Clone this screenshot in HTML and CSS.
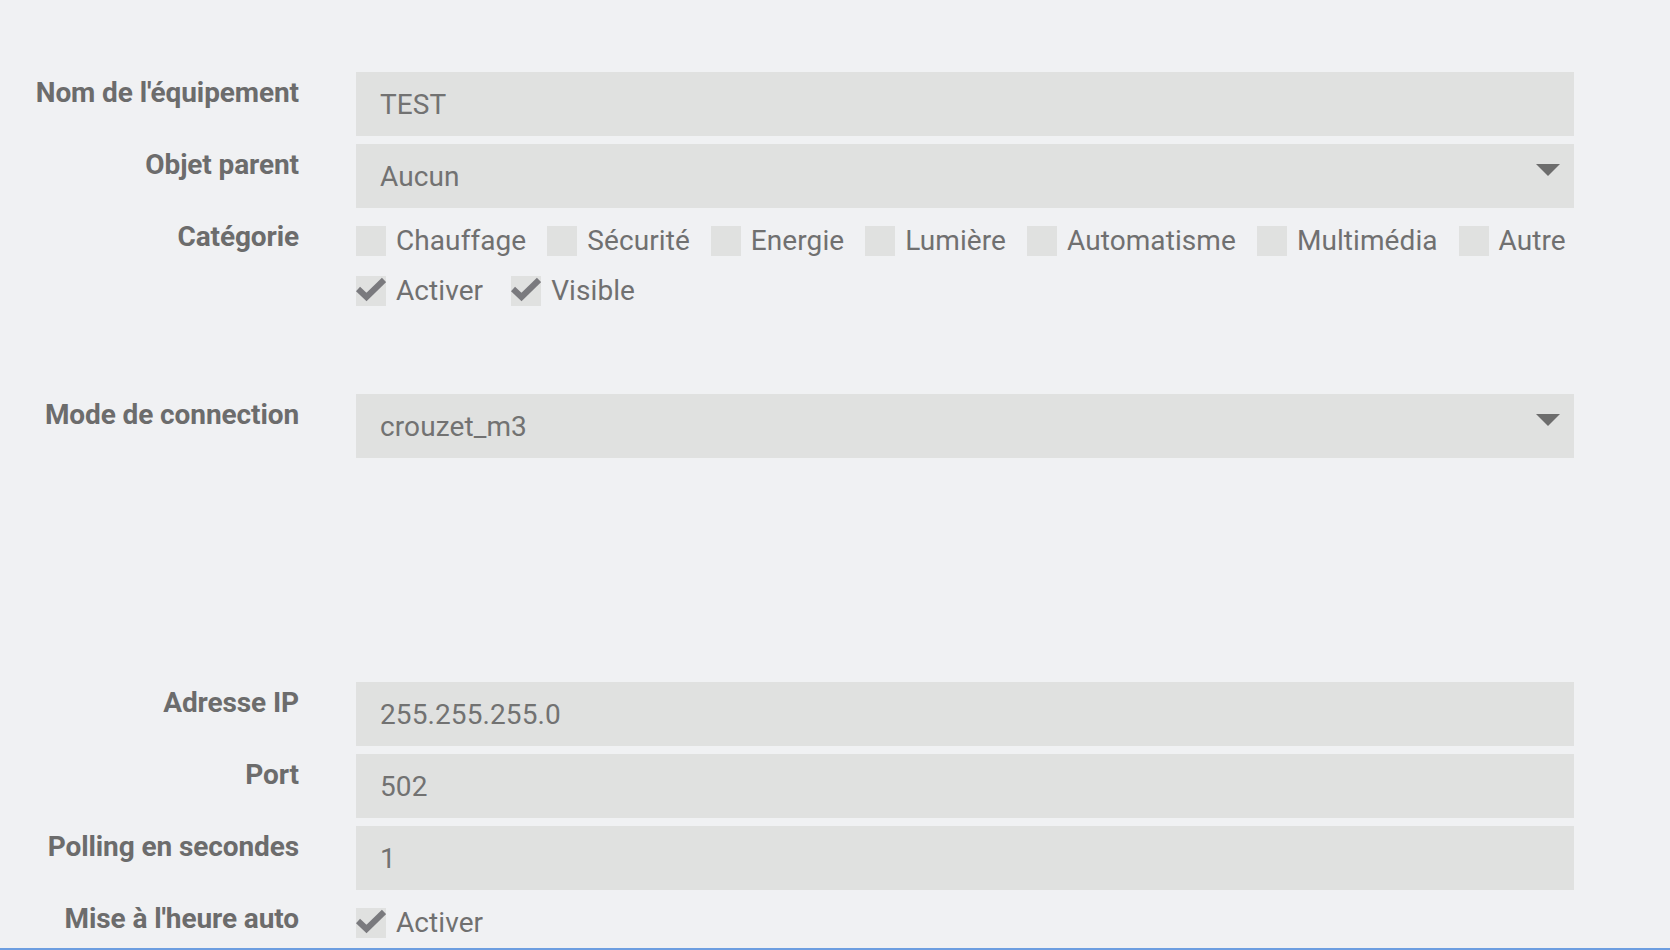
FILE: index.html
```html
<!DOCTYPE html>
<html lang="fr">
<head>
<meta charset="utf-8">
<title>Équipement</title>
<link rel="stylesheet" href="styles.css">
</head>
<body>
<div class="page">
  <form class="form">
    <div class="row">
      <label class="lbl">Nom de l'équipement</label>
      <div class="field"><input class="input" type="text" value="TEST"></div>
    </div>
    <div class="row">
      <label class="lbl">Objet parent</label>
      <div class="field select"><span class="value">Aucun</span><span class="caret"></span></div>
    </div>
    <div class="row">
      <label class="lbl">Catégorie</label>
      <div class="checks">
        <div class="line">
          <span class="cb"><span class="box"></span><span class="txt">Chauffage</span></span>
          <span class="cb"><span class="box"></span><span class="txt">Sécurité</span></span>
          <span class="cb"><span class="box"></span><span class="txt">Energie</span></span>
          <span class="cb"><span class="box"></span><span class="txt">Lumière</span></span>
          <span class="cb"><span class="box"></span><span class="txt">Automatisme</span></span>
          <span class="cb"><span class="box"></span><span class="txt">Multimédia</span></span>
          <span class="cb"><span class="box"></span><span class="txt">Autre</span></span>
        </div>
        <div class="line">
          <span class="cb wide"><span class="box"><svg viewBox="0 0 30 30"><polyline points="2,13 10.5,21 28,4"/></svg></span><span class="txt">Activer</span></span>
          <span class="cb wide"><span class="box"><svg viewBox="0 0 30 30"><polyline points="2,13 10.5,21 28,4"/></svg></span><span class="txt">Visible</span></span>
        </div>
      </div>
    </div>
    <div class="row mode">
      <label class="lbl">Mode de connection</label>
      <div class="field select"><span class="value">crouzet_m3</span><span class="caret"></span></div>
    </div>
    <div class="row ip">
      <label class="lbl">Adresse IP</label>
      <div class="field"><input class="input" type="text" value="255.255.255.0"></div>
    </div>
    <div class="row">
      <label class="lbl">Port</label>
      <div class="field"><input class="input" type="text" value="502"></div>
    </div>
    <div class="row">
      <label class="lbl">Polling en secondes</label>
      <div class="field"><input class="input" type="text" value="1"></div>
    </div>
    <div class="row">
      <label class="lbl">Mise à l'heure auto</label>
      <div class="checks">
        <div class="line">
          <span class="cb"><span class="box"><svg viewBox="0 0 30 30"><polyline points="2,13 10.5,21 28,4"/></svg></span><span class="txt">Activer</span></span>
        </div>
      </div>
    </div>
  </form>
  <div class="footer"></div>
</div>
</body>
</html>
```
FILE: styles.css
```css
* { box-sizing: border-box; }
html, body {
  margin: 0;
  padding: 0;
  background: #f0f1f3;
  height: 950px;
  overflow: hidden;
}
body {
  font-family: Roboto, "Liberation Sans", sans-serif;
  color: #6f6f6f;
}
.page {
  padding-top: 72px;
}
.form {
  display: flex;
  flex-direction: column;
  gap: 8px;
}
.row {
  display: grid;
  grid-template-columns: 299px 1218px;
  column-gap: 57px;
  align-items: start;
}
.row.mode { margin-top: 70px; }
.row.ip { margin-top: 216px; }
.lbl {
  font-weight: 700;
  font-size: 28px;
  line-height: 33.6px;
  padding-top: 4px;
  text-align: right;
  color: #6c6c6c;
  letter-spacing: -0.1px;
  white-space: nowrap;
}
.field {
  height: 64px;
  background: #e0e1e0;
  position: relative;
}
.input {
  display: block;
  width: 100%;
  height: 64px;
  border: 0;
  outline: none;
  margin: 0;
  background: transparent;
  padding: 1px 24px 0;
  font-family: Roboto, "Liberation Sans", sans-serif;
  font-size: 28px;
  letter-spacing: 0.1px;
  color: #727272;
}
.select {
  display: flex;
  align-items: center;
  padding: 0 24px;
  font-size: 28px;
  letter-spacing: 0.1px;
  color: #727272;
}
.caret {
  position: absolute;
  right: 14px;
  top: 20px;
  width: 0;
  height: 0;
  border-left: 12px solid transparent;
  border-right: 12px solid transparent;
  border-top: 12px solid #6d6d6d;
}
.checks {
  font-size: 28px;
  color: #707070;
  letter-spacing: 0.08px;
}
.line {
  display: flex;
  align-items: center;
  height: 50px;
  white-space: nowrap;
}
.cb {
  display: inline-flex;
  align-items: center;
  margin-right: 21px;
}
.cb.wide { margin-right: 28px; }
.txt {
  padding-bottom: 1px;
}
.box {
  width: 30px;
  height: 30px;
  background: #e0e1e0;
  margin-right: 10px;
  display: inline-block;
  flex: none;
}
.box svg {
  display: block;
  width: 30px;
  height: 30px;
}
.box polyline {
  fill: none;
  stroke: #7a7a7e;
  stroke-width: 6;
  stroke-linejoin: miter;
  stroke-linecap: butt;
}
.footer {
  border-top: 2px solid #6d9ee0;
}
```
